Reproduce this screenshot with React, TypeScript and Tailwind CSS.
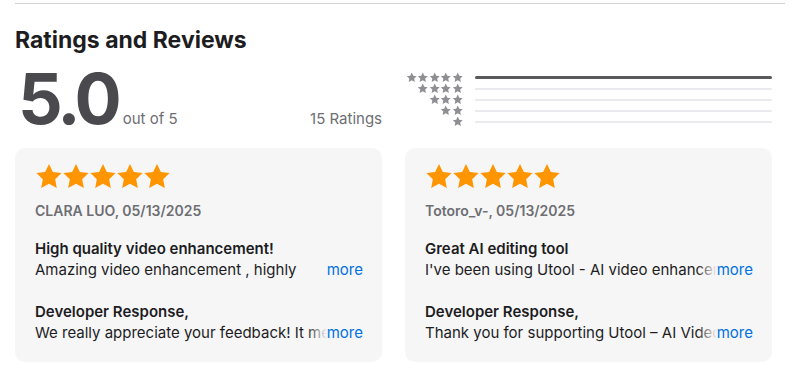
import React from 'react';

const font = { fontFamily: 'Inter, "Noto Sans", sans-serif' };

const Star = ({ className }: { className: string }) => (
    <svg viewBox="0 0 24 24" className={className}>
        <path d="M12 1.2l3.3 6.9 7.5 1-5.5 5.2 1.4 7.5L12 18.2l-6.7 3.6 1.4-7.5L1.2 9.1l7.5-1z" fill="currentColor" />
    </svg>
);

const Stars = ({ n, className, wrap }: { n: number; className: string; wrap: string }) => (
    <div className={wrap}>
        {Array.from({ length: n }).map((_, i) => (
            <Star key={i} className={className} />
        ))}
    </div>
);

const Clamp = ({ text }: { text: string }) => (
    <div className="relative h-[21px] overflow-hidden text-[15px] leading-[21px] text-[#1d1d1f]">
        <p>{text}</p>
        <div className="absolute right-0 top-0 flex h-[21px] items-center">
            <div className="h-full w-[20px] bg-gradient-to-r from-[#f6f6f7]/0 to-[#f6f6f7]" />
            <span className="bg-[#f6f6f7] text-[#0071e3]">more</span>
        </div>
    </div>
);

interface ReviewProps {
    author: string;
    title: string;
    body: string;
    reply: string;
}

const ReviewCard: React.FC<ReviewProps> = ({ author, title, body, reply }) => (
    <div className="flex h-[214px] flex-col rounded-[10px] bg-[#f6f6f7] pl-5 pr-[19px] pt-[14px]">
        <Stars n={5} wrap="flex h-[28px] items-center" className="h-[29px] w-[28px] -mx-[0.5px] text-[#ff9500]" />
        <div className="mt-[12px] text-[14px] font-semibold leading-[18px] text-[#6e6e73]">{author}</div>
        <div className="mt-[18px] text-[15px] font-semibold leading-[21px] text-[#1d1d1f]">{title}</div>
        <Clamp text={body} />
        <div className="mt-[21px] text-[15px] font-semibold leading-[21px] text-[#1d1d1f]">Developer Response,</div>
        <Clamp text={reply} />
    </div>
);

export default function App() {
    const rows = [5, 4, 3, 2, 1];
    return (
        <div className="h-[384px] w-[800px] overflow-hidden bg-white px-[15px]" style={font}>
            <div className="mt-[3px] h-px bg-[#d2d2d7]" />
            <h2 className="mt-[22px] text-[23px] font-bold leading-[28px] text-[#1d1d1f]">Ratings and Reviews</h2>
            <div className="mt-[10px] flex">
                <div className="flex w-[367px] items-baseline justify-between">
                    <div className="flex items-baseline">
                        <span className="ml-[3px] text-[70px] font-bold leading-[70px] tracking-[-4px] text-[#4a4a4e]">5.0</span>
                        <span className="ml-[5px] text-[15px] text-[#6e6e73]">out of 5</span>
                    </div>
                    <span className="text-[15px] text-[#6e6e73]">15 Ratings</span>
                </div>
                <div className="ml-[23px] mt-[8px] flex w-[367px] flex-col">
                    {rows.map((n) => (
                        <div key={n} className="flex h-[11px] items-center">
                            <Stars n={n} wrap="flex w-[58px] justify-end" className="h-[11px] w-[11.5px] text-[#8e8e93]" />
                            <div className="ml-[12px] flex h-[3px] flex-1 items-center">
                                <div className={n === 5 ? 'h-[3px] w-full rounded-full bg-[#5a5a5e]' : 'h-[2px] w-full rounded-full bg-[#ebebef]'} />
                            </div>
                        </div>
                    ))}
                </div>
            </div>
            <div className="mt-[14px] grid grid-cols-2 gap-[23px] pr-[13px]">
                <ReviewCard
                    author="CLARA LUO, 05/13/2025"
                    title="High quality video enhancement!"
                    body="Amazing video enhancement , highly recommended for everyone who loves restoring old videos."
                    reply="We really appreciate your feedback! It means a lot to our team and we will keep improving."
                />
                <ReviewCard
                    author="Totoro_v-, 05/13/2025"
                    title="Great AI editing tool"
                    body="I've been using Utool - AI video enhancer for a while and it works really well."
                    reply="Thank you for supporting Utool – AI Video Enhancer! We will keep improving."
                />
            </div>
        </div>
    );
}
